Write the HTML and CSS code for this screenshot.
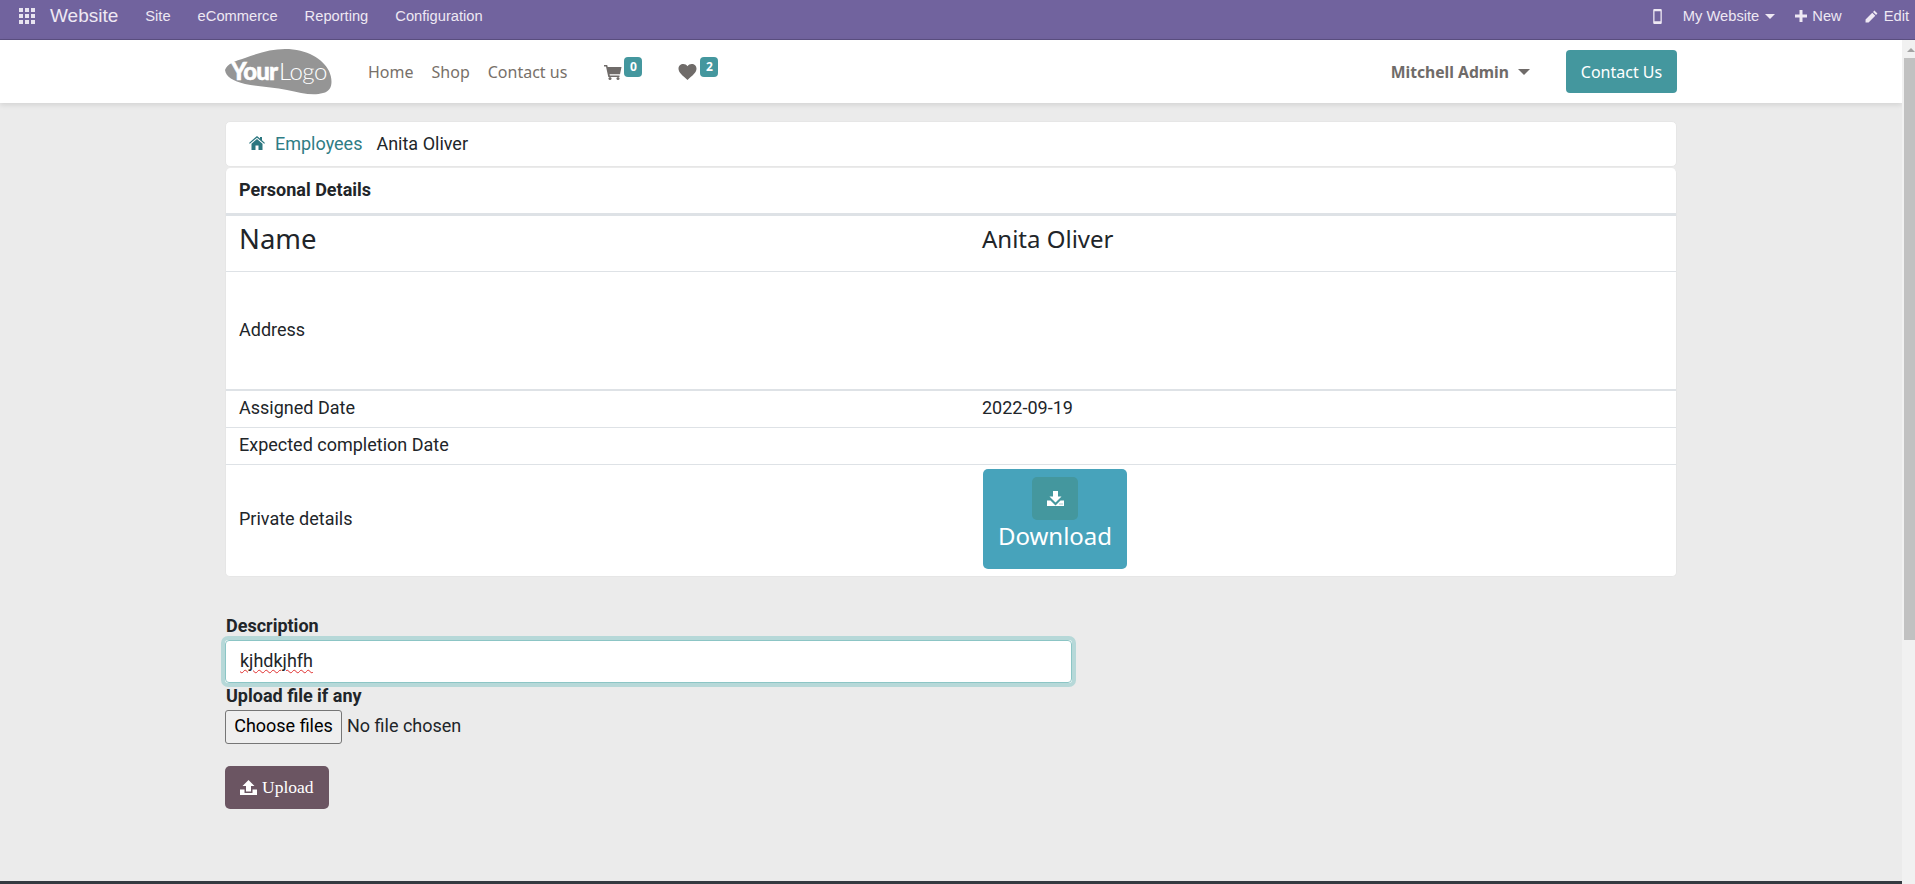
FILE: index.html
```html
<!DOCTYPE html>
<html lang="en">
<head>
<meta charset="utf-8">
<title>Anita Oliver</title>
<link rel="stylesheet" href="styles.css">
</head>
<body>
<header class="adminbar">
  <div class="admin-left">
    <svg class="apps" viewBox="0 0 16 16" width="16" height="16"><path d="M0 0h4v4H0zM6 0h4v4H6zM12 0h4v4h-4zM0 6h4v4H0zM6 6h4v4H6zM12 6h4v4h-4zM0 12h4v4H0zM6 12h4v4H6zM12 12h4v4h-4z"/></svg>
    <span class="brand">Website</span>
    <a class="admin-link">Site</a>
    <a class="admin-link">eCommerce</a>
    <a class="admin-link">Reporting</a>
    <a class="admin-link">Configuration</a>
  </div>
  <div class="admin-right">
    <svg class="phone" viewBox="0 0 8 14" width="9" height="15"><path fill-rule="evenodd" d="M1.2 0h5.600C7.500 0 8 .5 8 1.200v11.600C8 13.500 7.500 14 6.800 14H1.200C.5 14 0 13.500 0 12.800V1.200C0 .5.5 0 1.200 0zM1.200 2v9.500h5.600V2z"/></svg>
    <span class="admin-item my-site">My Website<i class="caret caret-small"></i></span>
    <span class="admin-item new"><svg viewBox="0 0 12 12" width="12" height="12"><path d="M4.500 0h3v4.500H12v3H7.500V12h-3V7.500H0v-3h4.500z"/></svg>New</span>
    <span class="admin-item edit"><svg viewBox="0 0 12 12" width="13" height="13"><path d="M8.700.5l2.800 2.800-1.300 1.300-2.800-2.800zM6.700 2.500l2.800 2.800L3.300 11.500H.5V8.700z"/></svg>Edit</span>
  </div>
</header>
<div class="page">
  <nav class="sitenav">
    <div class="sitenav-inner">
      <svg class="logo" viewBox="0 0 107 46" width="107" height="46">
        <path fill="#959595" d="M0 21C2 15 10 12 20 9 33 4 47 0 60 0 82 0 98 10 104 22 108 31 108 42 98 44 88 47 76 44 62 41 48 38 34 38 20 35 8 32 1 28 0 21Z"/>
        <text x="6" y="31" class="logo-your">Your</text>
        <text x="54" y="31" class="logo-logo">Logo</text>
      </svg>
      <a class="nav-link home">Home</a>
      <a class="nav-link">Shop</a>
      <a class="nav-link">Contact us</a>
      <span class="nav-icon cart">
        <svg viewBox="0 0 18 16" width="18" height="16"><path d="M0 1h3.200l.5 2H17.500l-1.500 7.200H5.500l.3 1.300H15.500V13H4.300L2 2.500H0z"/><circle cx="6" cy="14.500" r="1.500"/><circle cx="14" cy="14.500" r="1.500"/></svg>
        <b class="badge">0</b>
      </span>
      <span class="nav-icon heart">
        <svg viewBox="0 0 18 16" width="19" height="16"><path d="M9 16C4 11.500 0 8.500 0 4.800 0 2 2.100 0 4.800 0 6.500 0 8 .8 9 2.200 10 .8 11.500 0 13.200 0 15.900 0 18 2 18 4.800 18 8.500 14 11.500 9 16Z"/></svg>
        <b class="badge">2</b>
      </span>
      <span class="user">Mitchell Admin<i class="caret"></i></span>
      <a class="contact-btn">Contact Us</a>
    </div>
  </nav>
  <main class="content">
    <div class="crumbs">
      <svg class="home-icon" viewBox="0 0 16 14" width="16" height="14"><path d="M8 0l3 2.600V1h2v3.300l3 2.600-.8.9L8 1.700.8 7.800 0 6.900zM8 3l5.500 4.700V14H9.500V9.500h-3V14H2.500V7.700z"/></svg>
      <a class="crumb-link">Employees</a>
      <span class="crumb-current">Anita Oliver</span>
    </div>
    <div class="details">
      <div class="details-title">Personal Details</div>
      <div class="row row-name"><span class="col-key">Name</span><span class="col-val">Anita Oliver</span></div>
      <div class="row row-address"><span class="col-key">Address</span><span class="col-val"></span></div>
      <div class="row row-date"><span class="col-key">Assigned Date</span><span class="col-val">2022-09-19</span></div>
      <div class="row row-date"><span class="col-key">Expected completion Date</span><span class="col-val"></span></div>
      <div class="row row-private">
        <span class="col-key">Private details</span>
        <span class="col-val">
          <a class="download">
            <span class="download-icon"><svg viewBox="0 0 17 15" width="17" height="15"><path fill-rule="evenodd" d="M6 0h5v5.500h3.500L8.500 11.500 2.500 5.500H6zM0 9.500h3.500l5 5 5-5H17V15H0zM12.500 12.500v1h1v-1zM14.500 12.500v1h1v-1z"/></svg></span>
            <span class="download-label">Download</span>
          </a>
        </span>
      </div>
    </div>
    <form class="upload-form">
      <label class="field-label" for="desc">Description</label>
      <div class="input-ring"><div class="text-input" id="desc"><span class="misspelt">kjhdkjhfh</span></div></div>
      <label class="field-label second">Upload file if any</label>
      <div class="file-row"><span class="file-btn">Choose files</span><span class="file-none">No file chosen</span></div>
      <a class="upload-btn">
        <svg viewBox="0 0 17 15" width="17" height="15"><path fill-rule="evenodd" d="M8.500 0l6 6H11v5.500H6V6H2.500zM0 9.500h4.500V13h8V9.500H17V15H0z"/></svg>
        Upload
      </a>
    </form>
  </main>
  <footer class="footer-line"></footer>
  <div class="scrollbar"><span class="arrow"></span><span class="thumb"></span></div>
</div>
</body>
</html>
```

FILE: styles.css
```css
* { box-sizing: border-box; }
html, body { margin: 0; height: 884px; overflow: hidden; }
body { font-family: Roboto, "Liberation Sans", sans-serif; font-size: 18px; color: #212529; background: #ebebeb; display: flex; flex-direction: column; }
a { color: inherit; text-decoration: none; }

.adminbar { height: 40px; flex: none; background: #71639e; border-bottom: 1px solid #5b4f80; display: flex; justify-content: space-between; color: #eee8f3; font-family: "Liberation Sans", Arial, sans-serif; font-size: 14.700px; }
.admin-left, .admin-right { display: flex; align-items: center; height: 32px; }
.apps { fill: #e8e4f0; margin-left: 19px; margin-right: 15px; }
.brand { font-size: 19px; margin-right: 27px; }
.admin-link { margin-right: 27px; }
.admin-right svg { fill: #eee8f3; }
.phone { margin-right: 21px; }
.admin-item { display: flex; align-items: center; }
.admin-item svg { margin-right: 5px; }
.my-site { margin-right: 20px; }
.new { margin-right: 23px; }
.edit { margin-right: 6px; }
.edit svg { margin-right: 6px; }
.caret { display: inline-block; width: 0; height: 0; border-left: 6px solid transparent; border-right: 6px solid transparent; border-top: 6px solid #6f6b69; margin-left: 9px; }
.caret-small { border-left-width: 5.500px; border-right-width: 5.500px; border-top: 5.500px solid #eee8f3; margin-left: 6px; }

.page { position: relative; flex: 1; display: flex; flex-direction: column; min-height: 0; }
.sitenav { height: 63px; flex: none; background: #fff; box-shadow: 0 2px 5px rgba(0,0,0,.1); margin-right: 13px; position: relative; }
.sitenav-inner { width: 1452px; margin-left: 225px; height: 63px; display: flex; align-items: center; font-family: "Noto Sans", sans-serif; font-size: 16px; color: #777069; }
.logo { margin-right: 36px; flex: none; }
.logo-your { font-family: Lato, sans-serif; font-weight: 900; font-size: 24px; fill: #fff; stroke: #fff; stroke-width: .5; letter-spacing: -.8px; }
.logo-logo { font-family: Lato, sans-serif; font-weight: 300; font-size: 24px; fill: #fff; letter-spacing: -.5px; }
.nav-link { margin-right: 18px; }
.nav-icon { display: flex; align-items: flex-start; align-self: flex-start; margin-top: 17px; }
.nav-icon svg { fill: #6f6b69; margin-top: 7px; }
.cart { margin-left: 19px; margin-right: 36px; }
.badge { display: block; width: 18px; height: 20px; background: #44979e; color: #fff; font-size: 12px; line-height: 20px; text-align: center; border-radius: 4px; font-weight: 700; margin-left: 2px; }
.heart .badge { margin-left: 3px; }
.user { margin-left: auto; font-weight: 700; font-size: 15.700px; display: flex; align-items: center; margin-right: 36px; color: #6f6b69; }
.contact-btn { width: 111px; height: 43px; background: #44979e; color: #fff; border-radius: 4px; display: flex; align-items: center; justify-content: center; }

.content { margin-left: 225px; width: 1452px; padding-top: 18px; flex: 1; min-height: 0; }
.crumbs { height: 46px; background: #fff; border-radius: 5px; border: 1px solid #e6e6e6; display: flex; align-items: center; padding-left: 23px; padding-bottom: 2px; }
.home-icon { fill: #2c7780; margin-right: 10px; }
.crumb-link { color: #2f7d85; margin-right: 14px; }
.crumb-current { color: #212529; }
.details { background: #fff; border-radius: 5px; border: 1px solid #e6e6e6; border-top: 0; margin-top: 1px; margin-bottom: 39px; }
.details-title { height: 48px; font-weight: 700; display: flex; align-items: center; padding-left: 13px; padding-bottom: 3px; border-bottom: 3px solid #dee2e6; }
.row { display: grid; grid-template-columns: 743px 1fr; align-items: center; border-bottom: 1px solid #dee2e6; padding-left: 13px; }
.row:last-child { border-bottom: 0; }
.row-name { height: 56px; padding-bottom: 11px; font-size: 27.500px; font-family: "Noto Sans", sans-serif; }
.row-name .col-val { font-size: 24px; }
.row-address { height: 119px; padding-bottom: 2px; border-bottom-width: 2px; }
.row-date { height: 37px; padding-bottom: 3px; }
.row-private { height: 111px; padding-bottom: 4px; }
.col-val { display: block; }
.download { display: flex; flex-direction: column; align-items: center; width: 144px; height: 100px; margin-left: 1px; background: #47a3bb; border-radius: 5px; padding-top: 8px; color: #fff; font-family: "Noto Sans", sans-serif; }
.download-icon { width: 46px; height: 43px; background: #44979e; border-radius: 5px; display: flex; align-items: center; justify-content: center; }
.download-icon svg { fill: #fff; }
.download-label { font-size: 24px; line-height: 32px; }

.upload-form { width: 851px; }
.field-label { display: block; font-weight: 700; line-height: 20px; margin-left: 1px; }
.input-ring { border: 4px solid #b6d8d8; border-radius: 7px; background: #fff; margin-left: -4px; }
.text-input { height: 43px; padding-left: 14px; padding-bottom: 2px; background: #fff; border: 1px solid #8cc5c5; border-radius: 4px; display: flex; align-items: center; }
.misspelt { text-decoration: underline wavy #e03030 1px; text-underline-offset: 2px; }
.second { line-height: 18px; }
.file-row { display: flex; align-items: center; margin-top: 5px; }
.file-btn { width: 117px; height: 34px; padding-bottom: 3px; border: 1px solid #767676; border-radius: 3px; background: #efefef; display: flex; align-items: center; justify-content: center; color: #000; margin-right: 5px; }
.file-none { padding-bottom: 3px; }
.upload-btn { display: inline-flex; align-items: center; gap: 5px; margin-top: 22px; height: 43px; width: 104px; padding-left: 15px; background: #6b5562; border-radius: 5px; color: #fff; font-family: "Liberation Serif", serif; font-size: 17.500px; }
.upload-btn svg { fill: #fff; }

.footer-line { height: 3px; background: #343a40; flex: none; margin-right: 13px; }

.scrollbar { position: absolute; top: 0; right: 0; width: 13px; height: 100%; background: #f1f1f1; }
.scrollbar .arrow { position: absolute; top: 8px; left: 5px; width: 0; height: 0; border-left: 4px solid transparent; border-right: 4px solid transparent; border-bottom: 4px solid #a3a3a3; }
.scrollbar .thumb { position: absolute; top: 18px; left: 2px; width: 11px; height: 582px; background: #c1c1c1; }
```
